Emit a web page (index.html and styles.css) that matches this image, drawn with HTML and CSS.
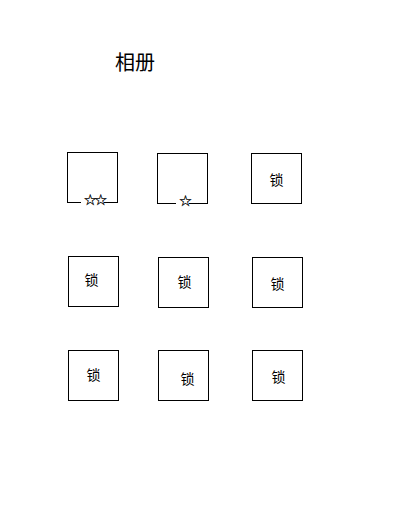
FILE: index.html
```html
<!DOCTYPE html>
<html lang="zh">
<head>
<meta charset="utf-8">
<title>相册</title>
<link rel="stylesheet" href="styles.css">
</head>
<body>
<div class="page">
  <h1 class="title">相册</h1>
  <div class="grid">
    <div class="cell c1"><div class="box box-star"><span class="stars">☆☆</span></div></div>
    <div class="cell c2"><div class="box box-star"><span class="stars">☆</span></div></div>
    <div class="cell c3"><div class="box"><span class="lock l3">锁</span></div></div>
    <div class="cell c4"><div class="box"><span class="lock l4">锁</span></div></div>
    <div class="cell c5"><div class="box"><span class="lock l5">锁</span></div></div>
    <div class="cell c6"><div class="box"><span class="lock l6">锁</span></div></div>
    <div class="cell c7"><div class="box"><span class="lock l7">锁</span></div></div>
    <div class="cell c8"><div class="box"><span class="lock l8">锁</span></div></div>
    <div class="cell c9"><div class="box"><span class="lock l9">锁</span></div></div>
  </div>
</div>
</body>
</html>
```
FILE: styles.css
```css
* { box-sizing: border-box; }
html, body { margin: 0; padding: 0; background: #fff; }
body {
  font-family: "Noto Sans CJK SC", "Noto Sans", sans-serif;
  color: #000;
}
.page {
  width: 400px;
  height: 523px;
  padding-top: 50px;
}
.title {
  margin: 0 0 0 115px;
  font-size: 20px;
  font-weight: normal;
  line-height: 24px;
  height: 24px;
}
.grid {
  margin: 78px 0 0 67px;
  display: grid;
  grid-template-columns: 90px 94px 51px;
  grid-template-rows: 104px 93px 51px;
}
.box {
  width: 51px;
  height: 51px;
  border: 1px solid #000;
  display: flex;
  align-items: center;
  justify-content: center;
}
.box-star {
  align-items: flex-end;
}
.stars {
  font-family: "DejaVu Sans", sans-serif;
  font-size: 15px;
  line-height: 15px;
  letter-spacing: -3px;
  padding-left: 3px;
  margin-bottom: -6px;
  color: #000;
  background: #fff;
  -webkit-text-stroke: 0.3px #000;
}
.lock {
  font-size: 14px;
  line-height: 16px;
  margin-bottom: 4px;
}
.c2, .c3 { margin-top: 1px; }
.c4 { margin-left: 1px; }
.c5, .c6, .c8, .c9 { margin-left: 1px; margin-top: 1px; }
.c7 { margin-left: 1px; margin-top: 1px; }
.l3 { padding-top: 4px; }
.l4 { padding-right: 4px; padding-bottom: 2px; }
.l5 { padding-left: 2px; }
.l6 { padding-top: 4px; }
.l7 { padding-left: 0; }
.l8 { padding-left: 8px; padding-top: 8px; }
.l9 { padding-left: 2px; padding-top: 4px; }
```
